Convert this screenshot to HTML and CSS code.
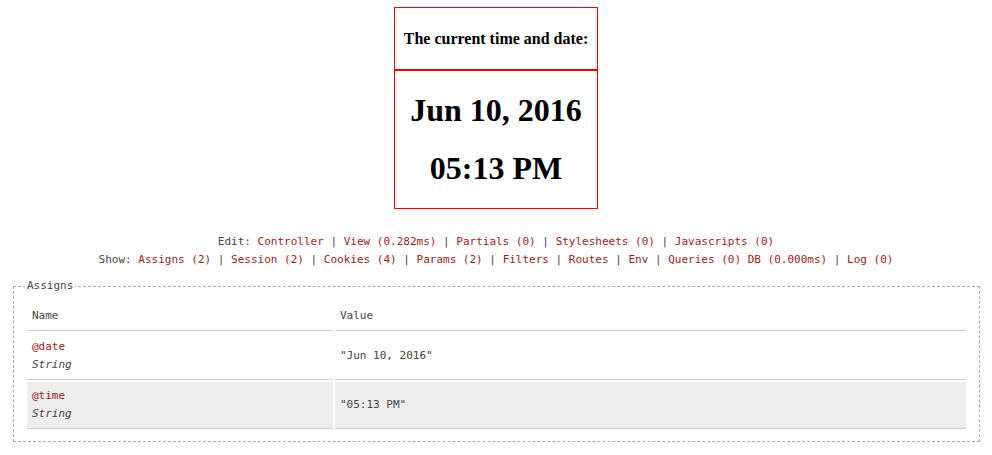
FILE: index.html
```html
<!DOCTYPE html>
<html>
<head>
<meta charset="utf-8">
<title>Time</title>
<link rel="stylesheet" href="styles.css">
</head>
<body>
<div class="clock">
  <div class="clock-head">The current time and date:</div>
  <div class="clock-body">
    <h1 class="clock-value">Jun 10, 2016</h1>
    <h1 class="clock-value">05:13 PM</h1>
  </div>
</div>

<div class="footnotes">
  <div class="fn-line">Edit: <a href="#">Controller</a> | <a href="#">View (0.282ms)</a> | <a href="#">Partials (0)</a> | <a href="#">Stylesheets (0)</a> | <a href="#">Javascripts (0)</a></div>
  <div class="fn-line">Show: <a href="#">Assigns (2)</a> | <a href="#">Session (2)</a> | <a href="#">Cookies (4)</a> | <a href="#">Params (2)</a> | <a href="#">Filters</a> | <a href="#">Routes</a> | <a href="#">Env</a> | <a href="#">Queries (0)</a> <a href="#">DB (0.000ms)</a> | <a href="#">Log (0)</a></div>

  <fieldset class="fn-fieldset">
    <legend class="fn-legend">Assigns</legend>
    <table class="fn-table">
      <thead>
        <tr><th class="col-name">Name</th><th>Value</th></tr>
      </thead>
      <tbody>
        <tr class="row-white">
          <td class="cell-name"><span class="var">@date</span><br><em class="type">String</em></td>
          <td class="cell-value">"Jun 10, 2016"</td>
        </tr>
        <tr class="row-gray">
          <td class="cell-name"><span class="var">@time</span><br><em class="type">String</em></td>
          <td class="cell-value">"05:13 PM"</td>
        </tr>
      </tbody>
    </table>
  </fieldset>
</div>
</body>
</html>
```

FILE: styles.css
```css
html, body {
  margin: 0;
  padding: 0;
  background: #fff;
}

body {
  font-family: "Liberation Serif", "Times New Roman", serif;
  color: #000;
}

.clock {
  width: 204px;
  box-sizing: border-box;
  margin: 7px auto 0;
  border: 1px solid #f00;
  text-align: center;
}

.clock-head {
  font-size: 16px;
  font-weight: bold;
  line-height: 19px;
  padding: 21px 0;
  border-bottom: 2px solid #f00;
}

.clock-body {
  padding: 21px 0;
}

.clock-value {
  font-size: 32px;
  font-weight: bold;
  line-height: 37px;
  margin: 0;
}

.clock-value + .clock-value {
  margin-top: 21px;
}

.footnotes {
  margin-top: 24px;
  font-family: "DejaVu Sans Mono", "Liberation Mono", monospace;
  font-size: 11px;
  color: #444;
  text-align: center;
}

.fn-line {
  line-height: 18px;
  white-space: nowrap;
}

.fn-line a {
  color: #9b1b1b;
  text-decoration: none;
}

.fn-fieldset {
  margin: 9px 12px 0 13px;
  padding: 6px 11px 10px 11px;
  border: 1px dashed #aaa;
  text-align: left;
  color: #444;
  background: #fff;
}

.fn-legend {
  padding: 0 2px;
  line-height: 16px;
  background: #fff;
}

.fn-table {
  width: 100%;
  border-spacing: 2px;
  text-align: left;
  font-size: 11px;
}

.fn-table th,
.fn-table td {
  padding: 5px;
  border-bottom: 1px solid #ccc;
  line-height: 18px;
  color: #444;
  font-weight: normal;
}

.col-name {
  width: 296px;
}

.cell-name {
  vertical-align: top;
}

.cell-value {
  vertical-align: middle;
}

.row-gray td {
  background: #eee;
}

.row-white td {
  background: #fff;
}

.var {
  color: #9b1b1b;
}

.type {
  font-style: italic;
}
```
